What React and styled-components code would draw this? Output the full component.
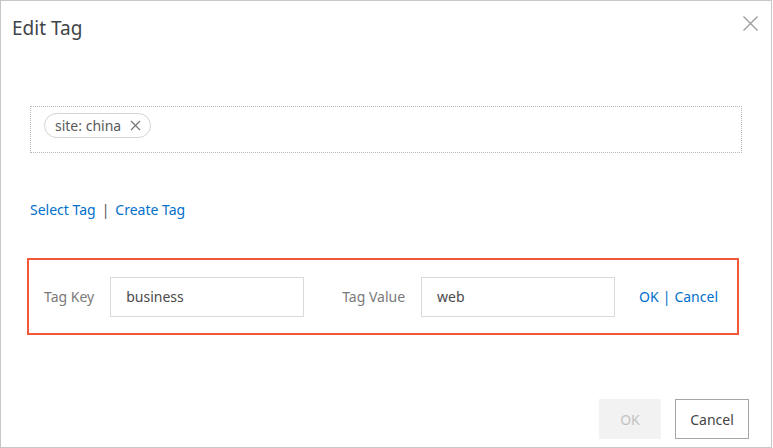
import React, { useState } from "react";
import styled, { createGlobalStyle } from "styled-components";

const GlobalStyle = createGlobalStyle`
  html, body {
    margin: 0;
    padding: 0;
    background: #ffffff;
  }
  body {
    font-family: "Noto Sans", "Open Sans", Arial, sans-serif;
    color: #333;
  }
`;

const App = () => {
  const [tagKey, setTagKey] = useState("business");
  const [tagValue, setTagValue] = useState("web");
  const [tags] = useState([{ key: "site", value: "china" }]);

  return (
    <>
      <GlobalStyle />
      <Dialog>
        <Header>
          <Title>Edit Tag</Title>
          <CloseButton aria-label="close">
            <svg width="15" height="15" viewBox="0 0 15 15">
              <path d="M0.5 0.5 L14.5 14.5 M14.5 0.5 L0.5 14.5" stroke="#9a9a9a" strokeWidth="1.3" fill="none" />
            </svg>
          </CloseButton>
        </Header>

        <Body>
          <TagBox>
            {tags.map((t) => (
              <Chip key={t.key}>
                {t.key}: {t.value}
                <ChipClose>
                  <svg width="11" height="11" viewBox="0 0 11 11">
                    <path d="M1 1 L10 10 M10 1 L1 10" stroke="#777" strokeWidth="1.2" fill="none" />
                  </svg>
                </ChipClose>
              </Chip>
            ))}
          </TagBox>

          <Links>
            <LinkText>Select Tag</LinkText>
            <Sep>|</Sep>
            <LinkText>Create Tag</LinkText>
          </Links>

          <EditBox>
            <Field>
              <Label>Tag Key</Label>
              <Input value={tagKey} onChange={(e) => setTagKey(e.target.value)} />
            </Field>
            <Field $gap={38}>
              <Label>Tag Value</Label>
              <Input value={tagValue} onChange={(e) => setTagValue(e.target.value)} />
            </Field>
            <Actions>
              <LinkText>OK</LinkText>
              <Sep $small>|</Sep>
              <LinkText>Cancel</LinkText>
            </Actions>
          </EditBox>
        </Body>

        <Footer>
          <Button disabled>OK</Button>
          <Button $outline>Cancel</Button>
        </Footer>
      </Dialog>
    </>
  );
};

const Dialog = styled.div`
  box-sizing: border-box;
  width: 772px;
  height: 448px;
  border: 1px solid #c6c6c6;
  background: #fff;
  display: flex;
  flex-direction: column;
`;

const Header = styled.div`
  display: flex;
  align-items: center;
  justify-content: space-between;
  padding: 12px 13px 0 11px;
  height: 29px;
`;

const Title = styled.h2`
  margin: 0;
  font-size: 19px;
  font-weight: 400;
  color: #3f4448;
`;

const CloseButton = styled.button`
  border: none;
  background: none;
  padding: 0;
  width: 15px;
  height: 15px;
  display: flex;
  cursor: pointer;
  align-self: flex-start;
  margin-top: 3px;
`;

const Body = styled.div`
  flex: 1;
  padding: 64px 29px 0 29px;
`;

const TagBox = styled.div`
  box-sizing: border-box;
  height: 47px;
  border: 1px dotted #b8b8b8;
  padding: 6px 13px;
  display: flex;
  align-items: flex-start;
  gap: 8px;
`;

const Chip = styled.span`
  box-sizing: border-box;
  display: inline-flex;
  align-items: center;
  height: 25px;
  padding: 0 9px 0 10px;
  border: 1px solid #d4d4d4;
  border-radius: 13px;
  font-size: 14px;
  color: #5a5a5a;
`;

const ChipClose = styled.span`
  display: inline-flex;
  margin-left: 9px;
  cursor: pointer;
`;

const Links = styled.div`
  display: flex;
  align-items: center;
  margin-top: 46px;
  font-size: 14px;
  height: 20px;
`;

const LinkText = styled.a`
  color: #0070cc;
  cursor: pointer;
  text-decoration: none;
`;

const Sep = styled.span`
  margin: 0 ${(p) => (p.$small ? 4 : 6)}px;
  color: ${(p) => (p.$small ? "#0070cc" : "#555")};
`;

const EditBox = styled.div`
  box-sizing: border-box;
  margin: 39px 3px 0 -3px;
  height: 77px;
  border: 2px solid #f2593a;
  display: flex;
  align-items: center;
  padding: 0 19px 0 15px;
`;

const Field = styled.div`
  display: flex;
  align-items: center;
  margin-left: ${(p) => p.$gap || 0}px;
`;

const Label = styled.span`
  font-size: 14px;
  color: #7a7a7a;
  margin-right: 16px;
`;

const Input = styled.input`
  box-sizing: border-box;
  width: 194px;
  height: 40px;
  border: 1px solid #d9d9d9;
  padding: 0 15px;
  font-family: inherit;
  font-size: 14px;
  color: #4a4a4a;
  outline: none;
`;

const Actions = styled.div`
  margin-left: auto;
  font-size: 14px;
  display: flex;
  align-items: center;
`;

const Footer = styled.div`
  display: flex;
  justify-content: flex-end;
  gap: 14px;
  padding: 0 22px 8px 0;
`;

const Button = styled.button`
  box-sizing: border-box;
  height: 40px;
  padding: 0 14px;
  font-family: inherit;
  font-size: 14px;
  border: 1px solid ${(p) => (p.$outline ? "#a6a6a6" : "#f2f2f2")};
  background: ${(p) => (p.disabled ? "#f2f2f2" : "#fff")};
  color: ${(p) => (p.disabled ? "#c2c2c2" : "#444")};
  cursor: ${(p) => (p.disabled ? "not-allowed" : "pointer")};
  min-width: ${(p) => (p.$outline ? 74 : 62)}px;
`;

export default App;
